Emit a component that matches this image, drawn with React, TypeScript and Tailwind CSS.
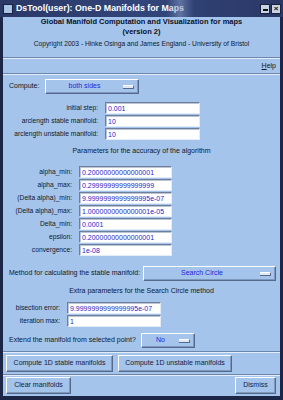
import React from "react";

const sunken = "bg-white border border-t-[#6f7f99] border-l-[#6f7f99] border-b-[#e4ecf8] border-r-[#e4ecf8] shadow-[inset_1px_1px_0_#b9c4d4]";
const raised = "bg-[#a4c4ec] border border-t-white border-l-white border-b-[#55698c] border-r-[#55698c] shadow-[inset_-1px_-1px_0_#7f98bd]";

function Field({ label, value, labelW, fieldW }: { label: string; value: string; labelW: string; fieldW: string }) {
  return (
    <div className="flex items-center h-[12px]">
      <div className={`${labelW} text-right pr-[7px] text-[#101828] whitespace-nowrap text-[6.7px]`}>{label}</div>
      <div className={`${fieldW} h-[12px] ${sunken} flex items-center pl-[2px] text-[#2626c8] leading-none whitespace-nowrap overflow-hidden`}>{value}</div>
    </div>
  );
}

function Combo({ text, w }: { text: string; w: string }) {
  return (
    <div className={`${w} h-[15px] ${raised} flex items-center`}>
      <span className="flex-1 text-center text-[#1f24d6]">{text}</span>
      <span className="w-[11px] h-[4px] mr-[4px] bg-[#dfe8f4] border-b border-r border-[#55698c] border-t border-t-white" />
    </div>
  );
}

function Groove() {
  return <div className="h-[2px] border-t border-t-[#6d86ab] border-b border-b-[#e2ecfa]" />;
}

function Btn({ text, w }: { text: string; w: string }) {
  return (
    <div className={`${w} h-[17px] ${raised} flex items-center justify-center text-[#151a3a] whitespace-nowrap`}>{text}</div>
  );
}

export default function App() {
  const params = [
    ["alpha_min:", "0.20000000000000001"],
    ["alpha_max:", "0.29999999999999999"],
    ["(Delta alpha)_min:", "9.9999999999999995e-07"],
    ["(Delta alpha)_max:", "1.0000000000000001e-05"],
    ["Delta_min:", "0.0001"],
    ["epsilon:", "0.20000000000000001"],
    ["convergence:", "1e-08"],
  ];

  return (
    <div className="w-[283px] h-[400px] bg-[#1c2748] flex flex-col font-['Liberation_Sans',Arial,sans-serif] text-[7px] overflow-hidden">
      {/* title bar */}
      <div className="h-[17px] flex items-center bg-gradient-to-r from-[#2a3866] via-[#32457a] to-[#2a3866] relative">
        <div className="ml-[3px] w-[10px] h-[10px] bg-[#a9c4e6] border border-[#1a2240]" />
        <span className="ml-[3px] text-white font-bold text-[8.8px]">DsTool(user): One-D Manifolds for Maps</span>
        <div className="absolute left-[166px] top-0 w-[28px] h-[17px] bg-gradient-to-r from-transparent via-[#7f93bf] to-transparent opacity-60" />
        <div className="ml-auto flex gap-[1px] mr-[2px]">
          <div className="w-[10px] h-[10px] bg-[#c8d4e4] border border-[#1a2240] flex items-end justify-center pb-[2px]">
            <div className="w-[5px] h-[2px] bg-[#111]" />
          </div>
          <div className="w-[10px] h-[10px] bg-[#c8d4e4] border border-[#1a2240] flex items-center justify-center text-[8px] font-bold leading-none text-[#111]">×</div>
        </div>
      </div>

      {/* body */}
      <div className="flex-1 mx-[3px] mb-[4px] bg-[#a4c4ec] flex flex-col text-[#101828]">
        <div className="h-[40px] flex flex-col items-center">
          <div className="font-bold text-[7.5px] leading-[10px] text-[#0d1226]">Global Manifold Computation and Visualization for maps</div>
          <div className="font-bold text-[7.5px] leading-[10px] text-[#0d1226]">(version 2)</div>
          <div className="mt-[2px] leading-[10px] text-[6.7px]">Copyright 2003 - Hinke Osinga and James England - University of Bristol</div>
        </div>
        <Groove />
        <div className="h-[14px] flex items-center justify-end pr-[4px]">
          <span><span className="underline">H</span>elp</span>
        </div>
        <Groove />

        <div className="mt-[4px] flex items-center h-[15px]">
          <span className="w-[42px] pl-[6px]">Compute:</span>
          <Combo text="both sides" w="w-[94px]" />
        </div>

        <div className="mt-[8px] flex flex-col gap-[1px]">
          <Field label="initial step:" value="0.001" labelW="w-[102px]" fieldW="w-[95px]" />
          <Field label="arclength stable manifold:" value="10" labelW="w-[102px]" fieldW="w-[95px]" />
          <Field label="arclength unstable manifold:" value="10" labelW="w-[102px]" fieldW="w-[95px]" />
        </div>

        <div className="mt-[6px] h-[10px] leading-[10px] text-center">Parameters for the accuracy of the algorithm</div>

        <div className="mt-[10px] flex flex-col gap-[1px]">
          {params.map(([l, v]) => (
            <Field key={l} label={l} value={v} labelW="w-[76px]" fieldW="w-[93px]" />
          ))}
        </div>

        <div className="mt-[10px] flex items-center h-[15px]">
          <span className="w-[140px] pl-[6px] whitespace-nowrap">Method for calculating the stable manifold:</span>
          <Combo text="Search Circle" w="w-[133px]" />
        </div>

        <div className="mt-[5px] h-[10px] leading-[10px] text-center">Extra parameters for the Search Circle method</div>

        <div className="mt-[6px] flex flex-col gap-[1px]">
          <Field label="bisection error:" value="9.9999999999999995e-07" labelW="w-[64px]" fieldW="w-[94px]" />
          <Field label="iteration max:" value="1" labelW="w-[64px]" fieldW="w-[94px]" />
        </div>

        <div className="mt-[6px] flex items-center h-[15px]">
          <span className="w-[138px] pl-[6px] whitespace-nowrap">Extend the manifold from selected point?</span>
          <Combo text="No" w="w-[54px]" />
        </div>

        <div className="mt-[3px]"><Groove /></div>
        <div className="mt-[2px] flex gap-[5px] px-[3px]">
          <Btn text="Compute 1D stable manifolds" w="w-[107px]" />
          <Btn text="Compute 1D unstable manifolds" w="w-[114px]" />
        </div>
        <div className="mt-[2px]"><Groove /></div>
        <div className="mt-[1px] flex px-[3px]">
          <Btn text="Clear manifolds" w="w-[65px]" />
          <div className="ml-auto mr-[1px]"><Btn text="Dismiss" w="w-[41px]" /></div>
        </div>
      </div>
    </div>
  );
}
